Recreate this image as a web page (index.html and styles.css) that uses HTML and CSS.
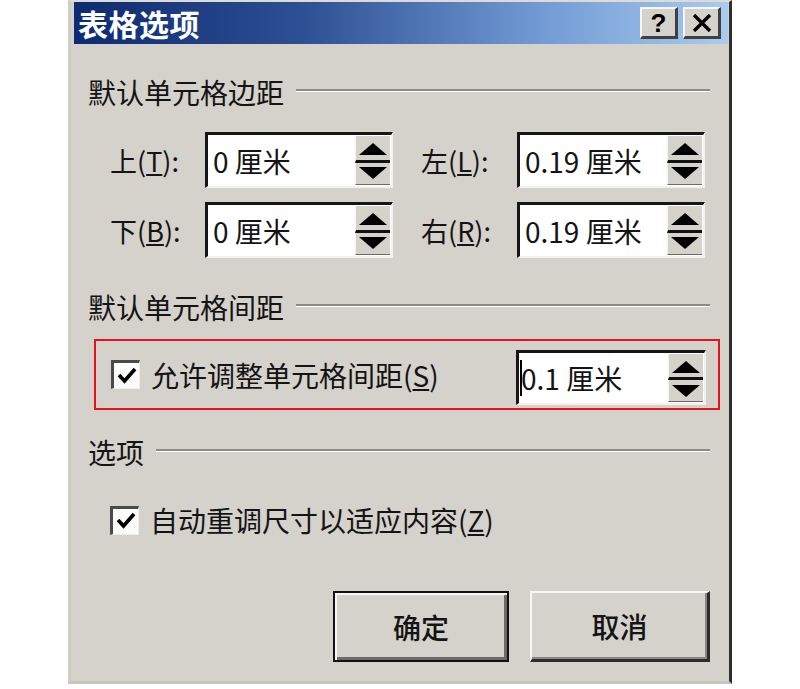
FILE: index.html
```html
<!DOCTYPE html>
<html lang="zh-CN">
<head>
<meta charset="utf-8">
<title>表格选项</title>
<link rel="stylesheet" href="styles.css">
</head>
<body>
<div class="dialog">
  <div class="titlebar">
    <span class="title">表格选项</span>
    <div class="tbtns">
      <div class="tbtn help">?</div>
      <div class="tbtn close">
        <svg viewBox="0 0 20 18" width="20" height="18"><path d="M2 1 L18 17 M18 1 L2 17" stroke="#000" stroke-width="3.4" fill="none"/></svg>
      </div>
    </div>
  </div>
  <div class="content">
    <div class="group-head first"><span class="gh-text">默认单元格边距</span><i class="etch"></i></div>
    <div class="margins">
      <span class="lbl">上(<u>T</u>):</span>
      <div class="spin"><span class="val">0 厘米</span><div class="arrows"><div class="sb up"><svg viewBox="0 0 28 12" width="28" height="12"><path d="M14 0 L28 12 H0Z"/></svg></div><div class="sb down"><svg viewBox="0 0 28 12" width="28" height="12"><path d="M0 0 H28 L14 12Z"/></svg></div></div></div>
      <span class="lbl lbl-r">左(<u>L</u>):</span>
      <div class="spin"><span class="val">0.19 厘米</span><div class="arrows"><div class="sb up"><svg viewBox="0 0 28 12" width="28" height="12"><path d="M14 0 L28 12 H0Z"/></svg></div><div class="sb down"><svg viewBox="0 0 28 12" width="28" height="12"><path d="M0 0 H28 L14 12Z"/></svg></div></div></div>
      <span class="lbl">下(<u>B</u>):</span>
      <div class="spin"><span class="val">0 厘米</span><div class="arrows"><div class="sb up"><svg viewBox="0 0 28 12" width="28" height="12"><path d="M14 0 L28 12 H0Z"/></svg></div><div class="sb down"><svg viewBox="0 0 28 12" width="28" height="12"><path d="M0 0 H28 L14 12Z"/></svg></div></div></div>
      <span class="lbl lbl-r">右(<u>R</u>):</span>
      <div class="spin"><span class="val">0.19 厘米</span><div class="arrows"><div class="sb up"><svg viewBox="0 0 28 12" width="28" height="12"><path d="M14 0 L28 12 H0Z"/></svg></div><div class="sb down"><svg viewBox="0 0 28 12" width="28" height="12"><path d="M0 0 H28 L14 12Z"/></svg></div></div></div>
    </div>

    <div class="group-head second"><span class="gh-text">默认单元格间距</span><i class="etch"></i></div>
    <div class="spacing-row">
      <div class="check"><svg viewBox="0 0 20 18" width="20" height="18"><path d="M2 8 L7.5 14 L18 2" stroke="#000" stroke-width="3.6" fill="none"/></svg></div>
      <span class="check-lbl">允许调整单元格间距(<u>S</u>)</span>
      <div class="spin spin-s"><span class="val val-s"><i class="caret"></i>0.1 厘米</span><div class="arrows"><div class="sb up"><svg viewBox="0 0 28 12" width="28" height="12"><path d="M14 0 L28 12 H0Z"/></svg></div><div class="sb down"><svg viewBox="0 0 28 12" width="28" height="12"><path d="M0 0 H28 L14 12Z"/></svg></div></div></div>
    </div>

    <div class="group-head third"><span class="gh-text">选项</span><i class="etch"></i></div>
    <div class="option-row">
      <div class="check"><svg viewBox="0 0 20 18" width="20" height="18"><path d="M2 8 L7.5 14 L18 2" stroke="#000" stroke-width="3.6" fill="none"/></svg></div>
      <span class="check-lbl">自动重调尺寸以适应内容(<u>Z</u>)</span>
    </div>

    <div class="buttons">
      <div class="btn default">确定</div>
      <div class="btn cancel">取消</div>
    </div>
  </div>
</div>
</body>
</html>
```

FILE: styles.css
```css
html, body {
  margin: 0;
  padding: 0;
  background: #ffffff;
}

body {
  font-family: "Noto Sans CJK SC", "Noto Sans", sans-serif;
  color: #141414;
}

.dialog {
  margin-left: 68px;
  width: 664px;
  height: 684px;
  box-sizing: border-box;
  background: #d5d1cb;
  border-style: solid;
  border-width: 2px 3px 3px 3px;
  border-color: #dedbd5 #2e2e2e #c9c6c0 #cfccc6;
  display: flex;
  flex-direction: column;
}

.titlebar {
  height: 42px;
  margin: 0 1px 0 3px;
  background: linear-gradient(to right, #0e2a70 0%, #2d4f93 35%, #6f98d2 70%, #a9cbef 100%);
  display: flex;
  align-items: center;
  justify-content: space-between;
  padding-left: 4px;
  padding-right: 7px;
}

.title {
  color: #ffffff;
  font-size: 30px;
  font-weight: 700;
  letter-spacing: 0.5px;
  line-height: 1;
}

.tbtns {
  display: flex;
  gap: 5px;
}

.tbtn {
  width: 38px;
  height: 32px;
  box-sizing: border-box;
  background: #d5d1cb;
  border-style: solid;
  border-width: 2px 3px 3px 2px;
  border-color: #f7f6f2 #404040 #404040 #f7f6f2;
  display: flex;
  align-items: center;
  justify-content: center;
  font-family: "Liberation Sans", sans-serif;
  font-weight: 700;
  font-size: 26px;
  line-height: 1;
  color: #000;
}

.content {
  flex: 1;
  padding: 30px 19px 0 17px;
  display: flex;
  flex-direction: column;
}

.group-head {
  height: 36px;
  display: flex;
  align-items: center;
  font-size: 28px;
  line-height: 36px;
}

.gh-text {
  white-space: nowrap;
}

.etch {
  flex: 1;
  height: 0;
  margin-left: 12px;
  margin-top: -4px;
  border-top: 2px solid #8d8a85;
  border-bottom: 1px solid #ffffff;
}

.margins {
  margin-top: 22px;
  margin-left: 22px;
  display: grid;
  grid-template-columns: 95px 188px 124px 188px;
  grid-auto-rows: 56px;
  row-gap: 14px;
  align-items: center;
}

.lbl {
  font-size: 27px;
  white-space: nowrap;
}

.lbl-r {
  padding-left: 28px;
}

.spin {
  height: 56px;
  box-sizing: border-box;
  background: #ffffff;
  border-style: solid;
  border-width: 3px 2px 2px 3px;
  border-color: #161616 #f2f1ee #f2f1ee #161616;
  display: flex;
  align-items: center;
}

.val {
  flex: 1;
  padding-left: 5px;
  font-size: 28px;
  white-space: nowrap;
  color: #141414;
}

.arrows {
  width: 35px;
  align-self: stretch;
  margin: 1px 1px 1px 0;
  display: flex;
  flex-direction: column;
}

.sb {
  flex: 1;
  background: #d5d1cb;
  display: flex;
  align-items: center;
  justify-content: center;
  box-sizing: border-box;
  border-left: 1px solid #f4f3ef;
}

.sb svg path {
  fill: #000;
}

.up {
  border-bottom: 3px solid #111;
  padding-top: 2px;
}

.down {
  border-bottom: 1px solid #6d6a66;
}

.group-head.second {
  margin-top: 31px;
}

.spacing-row {
  margin-top: 14px;
  margin-left: 6px;
  margin-right: -10px;
  height: 71px;
  box-sizing: border-box;
  border: 2px solid #e3141c;
  display: flex;
  align-items: center;
  padding-left: 15px;
  padding-right: 12px;
}

.check {
  width: 29px;
  height: 29px;
  box-sizing: border-box;
  background: #fbfbfa;
  border-style: solid;
  border-width: 3px 1px 1px 3px;
  border-color: #4a4a4a #efeeea #efeeea #4a4a4a;
  display: flex;
  align-items: center;
  justify-content: center;
  flex-shrink: 0;
}

.check-lbl {
  margin-left: 11px;
  font-size: 28px;
  white-space: nowrap;
}

.spin-s {
  margin-left: auto;
  width: 190px;
  height: 55px;
  margin-top: 6px;
}

.val-s {
  padding-left: 1px;
  display: flex;
  align-items: center;
}

.caret {
  display: inline-block;
  width: 2px;
  height: 36px;
  background: #000;
  margin-right: -1px;
}

.group-head.third {
  margin-top: 24px;
}

.option-row {
  margin-top: 34px;
  margin-left: 22px;
  height: 32px;
  display: flex;
  align-items: center;
}

.buttons {
  margin-top: 55px;
  display: flex;
  justify-content: flex-end;
  gap: 21px;
}

.btn {
  height: 71px;
  box-sizing: border-box;
  display: flex;
  align-items: center;
  justify-content: center;
  font-size: 28px;
  font-weight: 500;
  background: #d5d1cb;
}

.default {
  width: 176px;
  border: 2px solid #111;
  box-shadow: inset 2px 2px 0 #f7f6f2, inset -3px -3px 0 #6e6b67;
}

.cancel {
  width: 180px;
  border-style: solid;
  border-width: 2px 3px 3px 2px;
  border-color: #f7f6f2 #2c2c2c #2c2c2c #f7f6f2;
  box-shadow: inset -2px -2px 0 #8a8783;
}
```
